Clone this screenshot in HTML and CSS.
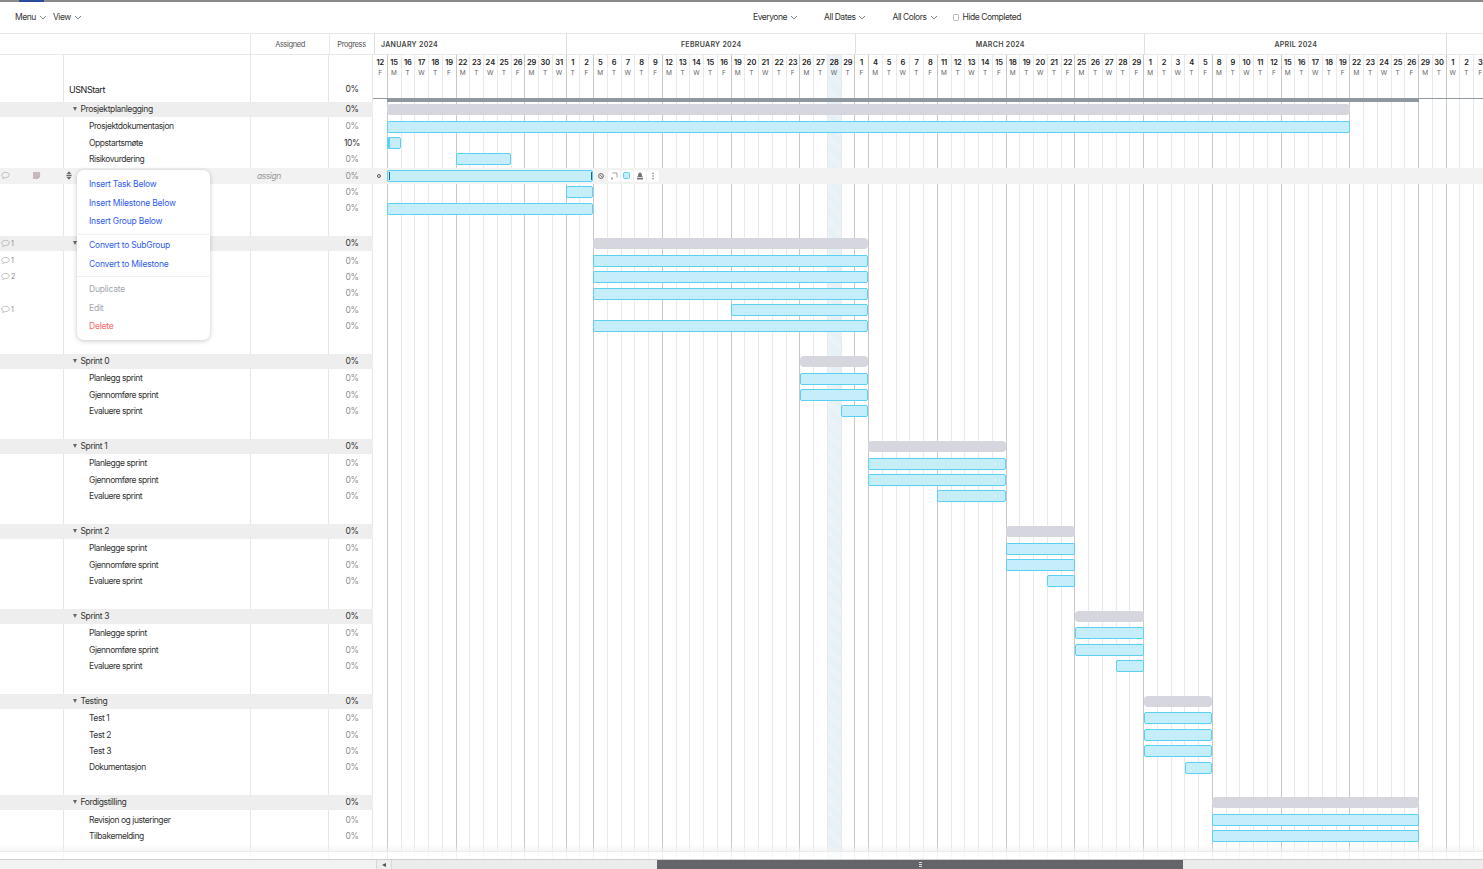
FILE: index.html
```html
<!DOCTYPE html>
<html lang="en">
<head>
<meta charset="utf-8">
<title>USNStart</title>
<link rel="stylesheet" href="styles.css">
</head>
<body>
<svg class="defs" width="0" height="0" aria-hidden="true">
  <symbol id="chev" viewBox="0 0 8 5"><path d="M1 1l3 3 3-3" fill="none" stroke="#666" stroke-width="0.8"/></symbol>
  <symbol id="cmt" viewBox="0 0 10 9"><path d="M5 1C2.600 1 .8 2.200.8 3.900c0 1 .6 1.800 1.600 2.300L2 8l2.200-1.200H5c2.400 0 4.200-1.200 4.200-2.900S7.400 1 5 1z" fill="none" stroke="#a9adb3" stroke-width="0.8"/></symbol>
</svg>
<div class="app">
  <div class="strip"><div class="strip-blue"></div></div>
  <div class="toolbar">
    <div class="tb-left">
      <span class="tb-item">Menu <svg class="chev"><use href="#chev"/></svg></span>
      <span class="tb-item">View <svg class="chev"><use href="#chev"/></svg></span>
    </div>
    <div class="tb-filters">
      <span class="tb-item">Everyone <svg class="chev"><use href="#chev"/></svg></span>
      <span class="tb-item">All Dates <svg class="chev"><use href="#chev"/></svg></span>
      <span class="tb-item">All Colors <svg class="chev"><use href="#chev"/></svg></span>
      <span class="tb-item tb-check"><span class="checkbox"></span>Hide Completed</span>
    </div>
  </div>
  <div class="head">
    <div class="head-left">
      <div class="h-blank"></div>
      <div class="h-col h-assigned">Assigned</div>
      <div class="h-col h-progress">Progress</div>
    </div>
    <div class="months">
      <div class="month m-jan">JANUARY 2024</div>
      <div class="month m-feb">FEBRUARY 2024</div>
      <div class="month m-mar">MARCH 2024</div>
      <div class="month m-apr">APRIL 2024</div>
      <div class="month m-may"></div>
    </div>
  </div>
  <div class="body">
    <div class="left">
      <div class="lrow root"><div></div><div class="name">USNStart</div><div></div><div class="pct strong">0%</div></div>

      <div class="sec">
        <div class="lrow grp"><div></div><div class="name"><span class="tri"></span>Prosjektplanlegging</div><div></div><div class="pct strong">0%</div></div>
        <div class="lrow"><div></div><div class="name task">Prosjektdokumentasjon</div><div></div><div class="pct">0%</div></div>
        <div class="lrow"><div></div><div class="name task">Oppstartsmøte</div><div></div><div class="pct strong">10%</div></div>
        <div class="lrow"><div></div><div class="name task">Risikovurdering</div><div></div><div class="pct">0%</div></div>
        <div class="lrow sel">
          <div class="cm">
            <svg class="ic-cmt"><use href="#cmt"/></svg>
            <svg class="ic-note" viewBox="0 0 9 9"><path d="M0 0h8v5L5 8H0z" fill="#c9b9bd"/><path d="M4.500 6l1 1 2-2" fill="none" stroke="#999" stroke-width="0.7"/></svg>
          </div>
          <div class="name"><svg class="ic-drag" viewBox="0 0 7 10"><path d="M3.500 0L6.500 3.500H.5z M.5 4.500h6v1h-6z M.5 6.500h6L3.500 10z" fill="#666"/></svg></div>
          <div class="assign">assign</div>
          <div class="pct">0%</div>
        </div>
        <div class="lrow"><div></div><div></div><div></div><div class="pct">0%</div></div>
        <div class="lrow"><div></div><div></div><div></div><div class="pct">0%</div></div>
      </div>

      <div class="sec">
        <div class="lrow grp"><div class="cm"><svg class="ic-cmt"><use href="#cmt"/></svg>1</div><div class="name"><span class="tri"></span></div><div></div><div class="pct strong">0%</div></div>
        <div class="lrow"><div class="cm"><svg class="ic-cmt"><use href="#cmt"/></svg>1</div><div></div><div></div><div class="pct">0%</div></div>
        <div class="lrow"><div class="cm"><svg class="ic-cmt"><use href="#cmt"/></svg>2</div><div></div><div></div><div class="pct">0%</div></div>
        <div class="lrow"><div></div><div></div><div></div><div class="pct">0%</div></div>
        <div class="lrow"><div class="cm"><svg class="ic-cmt"><use href="#cmt"/></svg>1</div><div></div><div></div><div class="pct">0%</div></div>
        <div class="lrow"><div></div><div></div><div></div><div class="pct">0%</div></div>
      </div>

      <div class="sec">
        <div class="lrow grp"><div></div><div class="name"><span class="tri"></span>Sprint 0</div><div></div><div class="pct strong">0%</div></div>
        <div class="lrow"><div></div><div class="name task">Planlegg sprint</div><div></div><div class="pct">0%</div></div>
        <div class="lrow"><div></div><div class="name task">Gjennomføre sprint</div><div></div><div class="pct">0%</div></div>
        <div class="lrow"><div></div><div class="name task">Evaluere sprint</div><div></div><div class="pct">0%</div></div>
      </div>

      <div class="sec">
        <div class="lrow grp"><div></div><div class="name"><span class="tri"></span>Sprint 1</div><div></div><div class="pct strong">0%</div></div>
        <div class="lrow"><div></div><div class="name task">Planlegge sprint</div><div></div><div class="pct">0%</div></div>
        <div class="lrow"><div></div><div class="name task">Gjennomføre sprint</div><div></div><div class="pct">0%</div></div>
        <div class="lrow"><div></div><div class="name task">Evaluere sprint</div><div></div><div class="pct">0%</div></div>
      </div>

      <div class="sec">
        <div class="lrow grp"><div></div><div class="name"><span class="tri"></span>Sprint 2</div><div></div><div class="pct strong">0%</div></div>
        <div class="lrow"><div></div><div class="name task">Planlegge sprint</div><div></div><div class="pct">0%</div></div>
        <div class="lrow"><div></div><div class="name task">Gjennomføre sprint</div><div></div><div class="pct">0%</div></div>
        <div class="lrow"><div></div><div class="name task">Evaluere sprint</div><div></div><div class="pct">0%</div></div>
      </div>

      <div class="sec">
        <div class="lrow grp"><div></div><div class="name"><span class="tri"></span>Sprint 3</div><div></div><div class="pct strong">0%</div></div>
        <div class="lrow"><div></div><div class="name task">Planlegge sprint</div><div></div><div class="pct">0%</div></div>
        <div class="lrow"><div></div><div class="name task">Gjennomføre sprint</div><div></div><div class="pct">0%</div></div>
        <div class="lrow"><div></div><div class="name task">Evaluere sprint</div><div></div><div class="pct">0%</div></div>
      </div>

      <div class="sec">
        <div class="lrow grp"><div></div><div class="name"><span class="tri"></span>Testing</div><div></div><div class="pct strong">0%</div></div>
        <div class="lrow"><div></div><div class="name task">Test 1</div><div></div><div class="pct">0%</div></div>
        <div class="lrow"><div></div><div class="name task">Test 2</div><div></div><div class="pct">0%</div></div>
        <div class="lrow"><div></div><div class="name task">Test 3</div><div></div><div class="pct">0%</div></div>
        <div class="lrow"><div></div><div class="name task">Dokumentasjon</div><div></div><div class="pct">0%</div></div>
      </div>

      <div class="sec">
        <div class="lrow grp"><div></div><div class="name"><span class="tri"></span>Fordigstilling</div><div></div><div class="pct strong">0%</div></div>
        <div class="lrow"><div></div><div class="name task">Revisjon og justeringer</div><div></div><div class="pct">0%</div></div>
        <div class="lrow"><div></div><div class="name task">Tilbakemelding</div><div></div><div class="pct">0%</div></div>
      </div>
    </div>

    <div class="chart">
      <div class="days">
        <div class="day first"><b>12</b><i>F</i></div>
        <div class="day mon"><b>15</b><i>M</i></div><div class="day"><b>16</b><i>T</i></div><div class="day"><b>17</b><i>W</i></div><div class="day"><b>18</b><i>T</i></div><div class="day"><b>19</b><i>F</i></div>
        <div class="day mon"><b>22</b><i>M</i></div><div class="day"><b>23</b><i>T</i></div><div class="day"><b>24</b><i>W</i></div><div class="day"><b>25</b><i>T</i></div><div class="day"><b>26</b><i>F</i></div>
        <div class="day mon"><b>29</b><i>M</i></div><div class="day"><b>30</b><i>T</i></div><div class="day"><b>31</b><i>W</i></div>
        <div class="day mon"><b>1</b><i>T</i></div><div class="day"><b>2</b><i>F</i></div>
        <div class="day mon"><b>5</b><i>M</i></div><div class="day"><b>6</b><i>T</i></div><div class="day"><b>7</b><i>W</i></div><div class="day"><b>8</b><i>T</i></div><div class="day"><b>9</b><i>F</i></div>
        <div class="day mon"><b>12</b><i>M</i></div><div class="day"><b>13</b><i>T</i></div><div class="day"><b>14</b><i>W</i></div><div class="day"><b>15</b><i>T</i></div><div class="day"><b>16</b><i>F</i></div>
        <div class="day mon"><b>19</b><i>M</i></div><div class="day"><b>20</b><i>T</i></div><div class="day"><b>21</b><i>W</i></div><div class="day"><b>22</b><i>T</i></div><div class="day"><b>23</b><i>F</i></div>
        <div class="day mon"><b>26</b><i>M</i></div><div class="day"><b>27</b><i>T</i></div><div class="day today"><b>28</b><i>W</i></div><div class="day"><b>29</b><i>T</i></div>
        <div class="day mon"><b>1</b><i>F</i></div>
        <div class="day mon"><b>4</b><i>M</i></div><div class="day"><b>5</b><i>T</i></div><div class="day"><b>6</b><i>W</i></div><div class="day"><b>7</b><i>T</i></div><div class="day"><b>8</b><i>F</i></div>
        <div class="day mon"><b>11</b><i>M</i></div><div class="day"><b>12</b><i>T</i></div><div class="day"><b>13</b><i>W</i></div><div class="day"><b>14</b><i>T</i></div><div class="day"><b>15</b><i>F</i></div>
        <div class="day mon"><b>18</b><i>M</i></div><div class="day"><b>19</b><i>T</i></div><div class="day"><b>20</b><i>W</i></div><div class="day"><b>21</b><i>T</i></div><div class="day"><b>22</b><i>F</i></div>
        <div class="day mon"><b>25</b><i>M</i></div><div class="day"><b>26</b><i>T</i></div><div class="day"><b>27</b><i>W</i></div><div class="day"><b>28</b><i>T</i></div><div class="day"><b>29</b><i>F</i></div>
        <div class="day mon"><b>1</b><i>M</i></div><div class="day"><b>2</b><i>T</i></div><div class="day"><b>3</b><i>W</i></div><div class="day"><b>4</b><i>T</i></div><div class="day"><b>5</b><i>F</i></div>
        <div class="day mon"><b>8</b><i>M</i></div><div class="day"><b>9</b><i>T</i></div><div class="day"><b>10</b><i>W</i></div><div class="day"><b>11</b><i>T</i></div><div class="day"><b>12</b><i>F</i></div>
        <div class="day mon"><b>15</b><i>M</i></div><div class="day"><b>16</b><i>T</i></div><div class="day"><b>17</b><i>W</i></div><div class="day"><b>18</b><i>T</i></div><div class="day"><b>19</b><i>F</i></div>
        <div class="day mon"><b>22</b><i>M</i></div><div class="day"><b>23</b><i>T</i></div><div class="day"><b>24</b><i>W</i></div><div class="day"><b>25</b><i>T</i></div><div class="day"><b>26</b><i>F</i></div>
        <div class="day mon"><b>29</b><i>M</i></div><div class="day"><b>30</b><i>T</i></div>
        <div class="day mon"><b>1</b><i>W</i></div><div class="day"><b>2</b><i>T</i></div><div class="day"><b>3</b><i>F</i></div>
      </div>

      <div class="rows">
        <div class="rootrow"><div class="rootline"></div><div class="rootbar"></div></div>

        <div class="sec">
          <div class="crow cgrp"><div class="gbar" style="--s:1;--n:70"></div></div>
          <div class="crow"><div class="bar" style="--s:1;--n:70"></div></div>
          <div class="crow"><div class="bar" style="--s:1;--n:1"><div class="done"></div></div></div>
          <div class="crow"><div class="bar" style="--s:6;--n:4"></div></div>
          <div class="crow csel">
            <span class="sel-o"></span>
            <div class="bar bar-sel"></div>
            <span class="tool-x"><svg viewBox="0 0 6 6"><circle cx="3" cy="3" r="2.400" fill="none" stroke="#666"/><path d="M1.500 1.500l3 3" stroke="#666" stroke-width="0.8"/></svg></span>
            <span class="tool"><svg viewBox="0 0 8 8"><path d="M2.500 1h4.500v4.500" fill="none" stroke="#888" stroke-width="0.8"/><path d="M1 5.500h2v2H1z" fill="#aaa"/></svg></span>
            <span class="tool"><span class="swatch"></span></span>
            <span class="tool"><svg viewBox="0 0 8 8"><path d="M4 .5a1.800 1.800 0 0 1 1.800 1.800c0 1 .4 2 .9 2.700H1.300c.5-.7.900-1.700.9-2.700A1.800 1.800 0 0 1 4 .5z" fill="#777"/><path d="M1 5.700h6v1.800H1z" fill="#777"/></svg></span>
            <span class="tool"><svg viewBox="0 0 8 8"><path d="M4 .5v1.500M4 3.300v1.500M4 6v1.500" stroke="#777" stroke-width="1.200"/></svg></span>
          </div>
          <div class="crow"><div class="bar" style="--s:14;--n:2"></div></div>
          <div class="crow"><div class="bar" style="--s:1;--n:15"></div></div>
        </div>

        <div class="sec">
          <div class="crow cgrp"><div class="gbar" style="--s:16;--n:20"></div></div>
          <div class="crow"><div class="bar" style="--s:16;--n:20"></div></div>
          <div class="crow"><div class="bar" style="--s:16;--n:20"></div></div>
          <div class="crow"><div class="bar" style="--s:16;--n:20"></div></div>
          <div class="crow"><div class="bar" style="--s:26;--n:10"></div></div>
          <div class="crow"><div class="bar" style="--s:16;--n:20"></div></div>
        </div>

        <div class="sec">
          <div class="crow cgrp"><div class="gbar" style="--s:31;--n:5"></div></div>
          <div class="crow"><div class="bar" style="--s:31;--n:5"></div></div>
          <div class="crow"><div class="bar" style="--s:31;--n:5"></div></div>
          <div class="crow"><div class="bar" style="--s:34;--n:2"></div></div>
        </div>

        <div class="sec">
          <div class="crow cgrp"><div class="gbar" style="--s:36;--n:10"></div></div>
          <div class="crow"><div class="bar" style="--s:36;--n:10"></div></div>
          <div class="crow"><div class="bar" style="--s:36;--n:10"></div></div>
          <div class="crow"><div class="bar" style="--s:41;--n:5"></div></div>
        </div>

        <div class="sec">
          <div class="crow cgrp"><div class="gbar" style="--s:46;--n:5"></div></div>
          <div class="crow"><div class="bar" style="--s:46;--n:5"></div></div>
          <div class="crow"><div class="bar" style="--s:46;--n:5"></div></div>
          <div class="crow"><div class="bar" style="--s:49;--n:2"></div></div>
        </div>

        <div class="sec">
          <div class="crow cgrp"><div class="gbar" style="--s:51;--n:5"></div></div>
          <div class="crow"><div class="bar" style="--s:51;--n:5"></div></div>
          <div class="crow"><div class="bar" style="--s:51;--n:5"></div></div>
          <div class="crow"><div class="bar" style="--s:54;--n:2"></div></div>
        </div>

        <div class="sec">
          <div class="crow cgrp"><div class="gbar" style="--s:56;--n:5"></div></div>
          <div class="crow"><div class="bar" style="--s:56;--n:5"></div></div>
          <div class="crow"><div class="bar" style="--s:56;--n:5"></div></div>
          <div class="crow"><div class="bar" style="--s:56;--n:5"></div></div>
          <div class="crow"><div class="bar" style="--s:59;--n:2"></div></div>
        </div>

        <div class="sec">
          <div class="crow cgrp"><div class="gbar" style="--s:61;--n:15"></div></div>
          <div class="crow"><div class="bar" style="--s:61;--n:15"></div></div>
          <div class="crow"><div class="bar" style="--s:61;--n:15"></div></div>
        </div>
      </div>
    </div>

    <div class="fade"></div>

    <div class="menu">
      <div class="m-sec m-sec1">
        <div class="m-item">Insert Task Below</div>
        <div class="m-item">Insert Milestone Below</div>
        <div class="m-item">Insert Group Below</div>
      </div>
      <div class="m-sec m-sec2">
        <div class="m-item">Convert to SubGroup</div>
        <div class="m-item">Convert to Milestone</div>
      </div>
      <div class="m-sec m-sec3">
        <div class="m-item muted">Duplicate</div>
        <div class="m-item muted">Edit</div>
        <div class="m-item danger">Delete</div>
      </div>
    </div>
  </div>
  <div class="scroll">
    <div class="sc-pad"></div>
    <div class="sc-btn"><span class="sc-arrow"></span></div>
    <div class="sc-track"><div class="sc-thumb"><span class="sc-grip"></span></div></div>
  </div>
</div>
</body>
</html>
```

FILE: styles.css
```css
* { box-sizing: border-box; }
html, body { margin: 0; height: 100%; overflow: hidden; background: #fff; }
body { font-family: Inter, "Liberation Sans", sans-serif; font-size: 8.5px; letter-spacing: -0.45px; color: #333; }
.defs { position: absolute; }
.app { display: flex; flex-direction: column; height: 869px; width: 1483px; overflow: hidden; }

.strip { height: 2px; background: #8a8a8a; flex: none; }
.strip-blue { width: 25px; height: 2px; margin-left: 19px; background: #2c4a9c; }

.toolbar { height: 32px; flex: none; display: flex; align-items: center; padding: 0 0 1px 15px; border-bottom: 1px solid #e8e8e8; }
.tb-left { display: flex; gap: 6px; width: 738px; }
.tb-filters { display: flex; align-items: center; }
.tb-item { display: inline-flex; align-items: center; gap: 3px; color: #333; white-space: nowrap; }
.tb-filters .tb-item { margin-right: 26px; }
.tb-filters .tb-item.tb-check { margin: 0; gap: 4px; }
.tb-filters .tb-item:nth-child(3) { margin-right: 15px; }
.chev { width: 8px; height: 5px; }
.checkbox { width: 6px; height: 7px; border: 1px solid #b5b5b5; border-radius: 1.5px; background: #fff; }

.head { height: 21px; flex: none; display: flex; border-bottom: 1px solid #e8e8e8; }
.head-left { width: 373px; flex: none; display: flex; color: #555; font-size: 7.5px; letter-spacing: -0.4px; }
.h-blank { width: 250px; }
.h-col { display: flex; align-items: center; justify-content: center; border-left: 1px solid #e8e8e8; }
.h-assigned { width: 79px; }
.h-progress { flex: 1; }
.months { flex: 1; display: flex; min-width: 0; font-size: 7px; font-weight: 600; letter-spacing: 0.3px; color: #444; }
.month { display: flex; align-items: center; justify-content: center; border-left: 1px solid #e0e0e0; flex: none; }
.m-jan { width: 192px; justify-content: flex-start; padding-left: 6px; margin-left: 1px; margin-right: -0.5px; }
.m-feb { width: 289px; padding-left: 1.5px; }
.m-mar { width: 289px; padding-left: 1.5px; }
.m-apr { width: 302.5px; padding-left: 1px; }
.m-may { flex: 1; }

.body { flex: 1; display: flex; position: relative; overflow: hidden; min-height: 0; }

.left {
  width: 373px; flex: none; overflow: hidden;
  background-image:
    linear-gradient(#e6e6e6, #e6e6e6), linear-gradient(#e6e6e6, #e6e6e6),
    linear-gradient(#e6e6e6, #e6e6e6), linear-gradient(#e6e6e6, #e6e6e6);
  background-size: 1px 100%;
  background-repeat: no-repeat;
  background-position: 63px 0, 250px 0, 328px 0, 372px 0;
}
.lrow { display: grid; grid-template-columns: 63px 187px 78px 45px; height: 16.4px; padding-bottom: 0.5px; align-items: center; white-space: nowrap; }
.root { height: 16px; margin-top: 26.5px; margin-bottom: 4.5px; }
.root .name { padding-left: 6px; font-size: 9px; color: #222; }
.sec { padding-bottom: 19.3px; }
.grp { height: 15px; margin-bottom: 1.5px; padding-bottom: 1px; background: #eeeeee; }
.grp .name { letter-spacing: -0.37px; }
.sel { background: #f2f2f2; }
.name { color: #333; display: flex; align-items: center; }
.grp .name { padding-left: 10px; }
.task { padding-left: 26px; }
.tri { width: 0; height: 0; border-left: 2.2px solid transparent; border-right: 2.2px solid transparent; border-top: 4px solid #666; margin-right: 3.5px; }
.pct { color: #8f8f8f; text-align: center; padding-left: 3px; }
.pct.strong { color: #333; }
.assign { color: #999; font-style: italic; padding-left: 7px; }
.cm { display: flex; align-items: center; padding-left: 1px; color: #8a8a8a; font-size: 7px; gap: 1px; }
.ic-cmt { width: 9px; height: 9px; }
.ic-note { width: 8px; height: 8px; margin-left: 22px; }
.ic-drag { width: 6px; height: 9px; margin-left: 3px; }

.chart { flex: 1; position: relative; overflow: hidden; min-width: 0; }
.days { display: flex; height: 100%; letter-spacing: 0; }
.day { flex: none; width: 13.76px; border-left: 1px solid #e9e9e9; text-align: center; padding-top: 3px; }
.day.first { border-left-color: transparent; }
.day.mon { border-left-color: #c8c8c8; }
.day.today { background: #e4eff5 repeating-linear-gradient(45deg, #e4eff5 0 1px, #eef5f8 1px 2px); }
.day b { display: block; font-size: 7.5px; font-weight: 600; line-height: 10px; color: #222; margin-left: -1.5px; margin-right: -1.5px; }
.day i { display: block; font-style: normal; font-size: 6.5px; line-height: 10px; color: #666; margin-left: -0.5px; }

.rows { position: absolute; left: 0; right: 0; top: 0; }
.rootrow { height: 47px; padding-top: 43px; }
.rootline { height: 1px; background: #8f989f; }
.rootbar { height: 4px; margin: -1px 0 0 13.76px; width: 1032px; background: #8f989f; }
.crow { height: 16.4px; display: flex; align-items: center; }
.cgrp { height: 15px; margin-bottom: 1.5px; }
.bar, .gbar { margin-left: calc(var(--s) * 13.76px); width: calc(var(--n) * 13.76px); flex: none; }
.bar { height: 12px; background: #c6eefa; border: 1px solid #5ad0f2; border-radius: 2px; }
.gbar { height: 11px; background: #d6d6df; border-radius: 4px; }
.done { width: 2px; height: 100%; background: #5ad0f2; }
.csel { background: #f2f2f2; }
.sel-o { width: 4px; height: 4px; margin-left: 4px; border: 1px solid #555; border-radius: 50%; flex: none; }
.bar-sel { margin-left: 5.76px; width: 206.4px; border-radius: 2px; position: relative; }
.bar-sel::before, .bar-sel::after { content: ""; position: absolute; top: 1px; bottom: 1px; width: 1px; background: #1d6a87; }
.bar-sel::before { left: 1px; }
.bar-sel::after { right: 0; }
.tool-x { width: 6px; height: 6px; margin-left: 4.5px; margin-right: 4px; flex: none; display: flex; }
.tool-x svg { width: 6px; height: 6px; }
.tool { width: 12px; height: 12px; margin-right: 1px; background: #fff; border-radius: 3px; display: flex; align-items: center; justify-content: center; flex: none; }
.tool svg { width: 8px; height: 8px; }
.swatch { width: 7px; height: 7px; background: #c6eefa; border: 1px solid #5ad0f2; border-radius: 1.5px; }

.fade { position: absolute; left: 0; right: 0; bottom: 0; height: 8px; background: rgba(255,255,255,0.72); border-top: 1px solid #ececec; box-shadow: 0 -3px 4px rgba(240,240,240,0.7); }

.menu { position: absolute; left: 77px; top: 115px; width: 133px; height: 170px; background: #fff; border-radius: 7px; box-shadow: 0 1px 5px rgba(0,0,0,0.22); color: #2f5cf0; letter-spacing: -0.2px; }
.m-item { height: 18.5px; line-height: 18.5px; padding-left: 12px; white-space: nowrap; }
.m-sec1 { padding: 5px 0 3px; border-bottom: 1px solid #f0f0f0; }
.m-sec2 { padding: 1.5px 0 3px; border-bottom: 1px solid #f0f0f0; }
.m-sec3 { padding: 3px 0 0; }
.muted { color: #a3a7ad; }
.danger { color: #f46a6a; }

.scroll { height: 10px; flex: none; display: flex; border-top: 1px solid #cfcfcf; background: #f2f2f2; }
.sc-pad { width: 376px; flex: none; }
.sc-btn { width: 16px; flex: none; background: #eeeeee; border-left: 1px solid #d8d8d8; border-right: 1px solid #d8d8d8; display: flex; align-items: center; justify-content: center; }
.sc-arrow { width: 0; height: 0; border-top: 2.5px solid transparent; border-bottom: 2.5px solid transparent; border-right: 4px solid #555; }
.sc-track { flex: 1; background: #ececec; }
.sc-thumb { margin-left: 265px; width: 526px; height: 100%; background: #636569; display: flex; justify-content: center; padding-top: 2px; }
.sc-grip { width: 3px; height: 5px; background: repeating-linear-gradient(#ddd 0 1px, #636569 1px 2px); }
```
